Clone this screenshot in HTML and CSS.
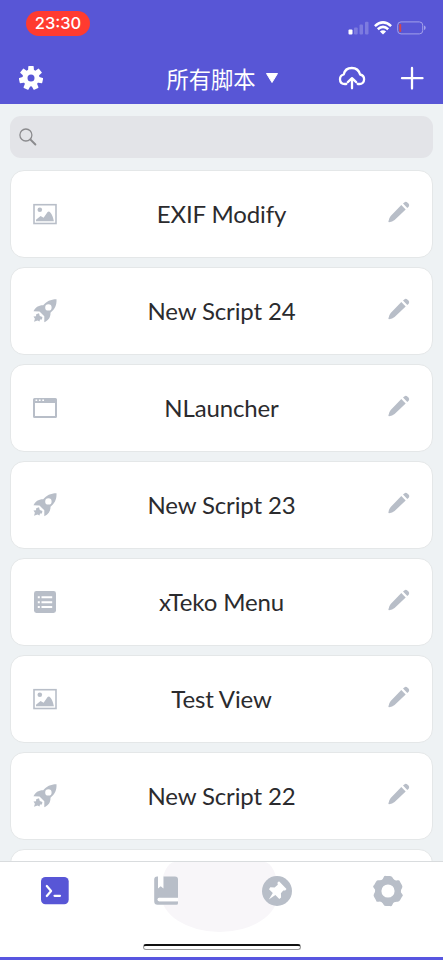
FILE: index.html
```html
<!DOCTYPE html>
<html lang="zh-CN">
<head>
<meta charset="utf-8">
<title>所有脚本</title>
<link rel="stylesheet" href="styles.css">
</head>
<body>
<svg class="defs" aria-hidden="true">
  <symbol id="image" viewBox="0 0 24 24">
    <rect x="1" y="2.700" width="22" height="18.800" fill="none" stroke="currentColor" stroke-width="1.600"/>
    <circle cx="6.800" cy="7.800" r="2.300"/>
    <path d="M3 19.200v-1.500l4.600-3.600 3 1.600 4-5.600q1.300-1.200 2.700.3 2.400 2.500 3.600 8.800z"/>
  </symbol>
  <symbol id="rocket" viewBox="0 0 24 24">
    <path fill-rule="evenodd" d="M23.500.3C17.500.3 13.500 2.500 10.200 6.300 5.500 6.200 2.300 8.500.500 12.300L6.500 12.500 11.300 17.300 11.300 23.300C15.700 21 17.600 18.300 17.500 13.700 21.800 10.200 23.800 6.300 23.500.3ZM15.400 5.200a3.200 3.200 0 1 1 0 6.400 3.200 3.200 0 0 1 0-6.400Z"/>
    <path d="M3.200 15.200 6 14.300l.8 2.700 2.600.9-.5 2.500-1.900.2-.5 2-2-1.100-3.500 1.200.9-3-1.400-2.100 2.500-.4Z"/>
  </symbol>
  <symbol id="window" viewBox="0 0 24 24">
    <path fill-rule="evenodd" d="M1.500 2h21q1.500 0 1.500 1.500v17q0 1.500-1.500 1.500h-21Q0 22 0 20.500v-17Q0 2 1.500 2Zm.5 5v13h20V7Z"/>
    <path fill="#fff" d="M2.500 3.500h1.700v1.600H2.500zm3.400 0h1.700v1.600H5.900zm3.400 0H11v1.600H9.300z"/>
  </symbol>
  <symbol id="list" viewBox="0 0 24 24">
    <rect x="1" y="1" width="22" height="22" rx="2.400"/>
    <path fill="#fff" d="M4.800 6.300h2v2h-2zm3.700 0h10.700v2H8.500zM4.800 11.200h2v2h-2zm3.700 0h10.700v2H8.500zM4.800 16h2v2h-2zm3.700 0h10.700v2H8.500z"/>
  </symbol>
  <symbol id="pencil" viewBox="0 0 24 24">
    <path d="M14.300 5 18.700 9.400 7.600 20q-2.300 1.800-5.500 2.200-.8 0-.7-.8.400-3.200 2.300-5.400ZM16 3.600l1.300-1.200q1.600-1.200 3.300.3l.9.900q1.400 1.500.2 3.200L20.300 8.100Z"/>
  </symbol>
</svg>

<div class="app">
  <header class="header">
    <div class="status">
      <span class="clock">23:30</span>
      <div class="indicators">
        <svg width="21" height="14" viewBox="0 0 21 14" fill="#fff"><rect x=".5" y="8.500" width="4" height="5" rx="1"/><g opacity=".22"><rect x="6" y="6.500" width="3.700" height="7" rx="1"/><rect x="11.500" y="3.500" width="3.500" height="10" rx="1"/><rect x="17" y=".7" width="3.500" height="12.800" rx="1"/></g></svg>
        <svg width="18" height="14" viewBox="0 0 18 14" fill="none" stroke="#fff" stroke-width="2.500"><path d="M.9 5.100Q9-2.400 17.100 5.100M3.800 8.200Q9 3.500 14.200 8.200"/><path fill="#fff" stroke="none" d="M5.900 10.400Q9 8 12.100 10.400L9 13.500Z"/></svg>
        <svg width="29" height="14" viewBox="0 0 29 14"><rect x=".7" y=".9" width="25" height="12" rx="3.300" fill="none" stroke="#a3a1ea"/><path fill="#a3a1ea" d="M27 4.500q1.700.6 1.700 2.300T27 9.100z"/><rect x="2.200" y="3" width="2" height="8" rx=".8" fill="#cf4650"/></svg>
      </div>
    </div>
    <nav class="nav">
      <svg class="nav-gear" width="24" height="24" viewBox="-12 -12 24 24" fill="#fff">
        <circle r="6" fill="none" stroke="#fff" stroke-width="5"/>
        <path id="tooth" d="M-3-7-2.700-11.400q0-.6.6-.6h4.200q.6 0 .6.600L3-7z"/>
        <use href="#tooth" transform="rotate(51.430)"/><use href="#tooth" transform="rotate(102.860)"/><use href="#tooth" transform="rotate(154.290)"/><use href="#tooth" transform="rotate(205.710)"/><use href="#tooth" transform="rotate(257.140)"/><use href="#tooth" transform="rotate(308.570)"/>
      </svg>
      <div class="nav-title"><h1>所有脚本</h1><svg width="12" height="10" viewBox="0 0 12 10"><path fill="#fff" d="M.5.500h11L6 9.500z" stroke="#fff" stroke-linejoin="round"/></svg></div>
      <div class="nav-actions">
        <svg width="28" height="24" viewBox="0 0 28 24" fill="none" stroke="#fff" stroke-width="2.300" stroke-linecap="round" stroke-linejoin="round"><path d="M8.300 18H7C3.800 18 2 15.900 2 13.200c0-2.500 1.600-4.200 3.700-4.700C6.500 4.500 9.800 2 13.800 2c4.200 0 7.300 2.700 8.300 6.500 2.400.5 4 2.200 4 4.700 0 2.700-1.900 4.800-4.600 4.800h-1.800M14 22.300v-9.500M9.800 16.100 14 12.200l4.200 3.900"/></svg>
        <svg width="24" height="24" viewBox="0 0 24 24" stroke="#fff" stroke-width="2.300" stroke-linecap="round"><path d="M12 2v20.500M2 12.200h20.500"/></svg>
      </div>
    </nav>
  </header>

  <main class="content">
    <div class="search"><svg width="18" height="18" viewBox="0 0 18 18" fill="none" stroke="#8b8b8e"><circle cx="6.900" cy="7" r="6" stroke-width="1.300"/><path d="m11.400 11.500 5 5" stroke-width="1.900" stroke-linecap="round"/></svg></div>
    <div class="card"><svg class="icon"><use href="#image"/></svg><span>EXIF Modify</span><svg class="icon"><use href="#pencil"/></svg></div>
    <div class="card"><svg class="icon"><use href="#rocket"/></svg><span>New Script 24</span><svg class="icon"><use href="#pencil"/></svg></div>
    <div class="card"><svg class="icon"><use href="#window"/></svg><span>NLauncher</span><svg class="icon"><use href="#pencil"/></svg></div>
    <div class="card"><svg class="icon"><use href="#rocket"/></svg><span>New Script 23</span><svg class="icon"><use href="#pencil"/></svg></div>
    <div class="card"><svg class="icon"><use href="#list"/></svg><span>xTeko Menu</span><svg class="icon"><use href="#pencil"/></svg></div>
    <div class="card"><svg class="icon"><use href="#image"/></svg><span>Test View</span><svg class="icon"><use href="#pencil"/></svg></div>
    <div class="card"><svg class="icon"><use href="#rocket"/></svg><span>New Script 22</span><svg class="icon"><use href="#pencil"/></svg></div>
    <div class="card"></div>
  </main>

  <footer class="tabbar">
    <div class="glow"></div>
    <div class="tabs">
      <svg viewBox="0 0 32 32"><rect x="2" y="2" width="27.700" height="27.300" rx="4.500" fill="#5856d6"/><path d="m7.800 11 4.300 5-4.300 5" fill="none" stroke="#fff" stroke-width="2.200" stroke-linecap="round" stroke-linejoin="round"/><path d="M15.500 20.800h5.500" stroke="#fff" stroke-width="2.200" stroke-linecap="round"/></svg>
      <svg viewBox="0 0 32 32"><path fill="#fff" d="M8 1.500h5.500v12H8z"/><path fill="#b8bec8" d="M8 1.500v12l2.700-2.200 2.800 2.200v-12H25q3 0 3 3V22.800H9q-1.500 0-1.500 1.700T9 26.300h19v2q0 1.500-1.500 1.500H7.500q-3.300 0-3.300-3.500V4.500q0-3 3-3Z"/><path fill="#fff" d="M9 23h19v3.200H9q-1.200 0-1.200-1.600T9 23Z"/></svg>
      <svg viewBox="0 0 32 32"><circle cx="16" cy="16" r="15" fill="#b8bec8"/><path fill="#fff" d="m18 6.300 7.500 7.600-1.300 1.700-1.900-.2-2.400 2.900.2 4.300-1.800 1.400-3.900-4.100L7.800 24.600l4-6.700-3.800-3.600 1.300-2 4.300.2 3.200-2.700-.4-2.100Z"/></svg>
      <svg viewBox="-16 -16 32 32"><circle r="9.700" fill="none" stroke="#b8bec8" stroke-width="6.200"/><g fill="#b8bec8"><path id="lobe" d="M-7-10.500Q-5.200-11-4.500-13.500T-2-15H2q1.800 0 2.500 1.500T7-10.500z"/><use href="#lobe" transform="rotate(60)"/><use href="#lobe" transform="rotate(120)"/><use href="#lobe" transform="rotate(180)"/><use href="#lobe" transform="rotate(240)"/><use href="#lobe" transform="rotate(300)"/></g></svg>
    </div>
    <div class="home"></div>
  </footer>
</div>
</body>
</html>
```

FILE: styles.css
```css
* { box-sizing: border-box; }
body { margin: 0; }
svg { display: block; flex: none; }
.defs { position: absolute; width: 0; height: 0; }
.app {
  height: 960px;
  display: flex;
  flex-direction: column;
  overflow: hidden;
  background: #eef2f4;
  font-family: Lato, "Noto Sans CJK SC", sans-serif;
}
.header {
  height: 104px;
  flex: none;
  background: #5856d6;
  color: #fff;
}
.status {
  height: 48px;
  padding: 11px 16px 0 26px;
  display: flex;
  justify-content: space-between;
  align-items: flex-start;
}
.clock {
  width: 64px;
  height: 25px;
  border-radius: 13px;
  background: #ff3b30;
  font: 500 16.500px/25px Inter, sans-serif;
  text-align: center;
}
.indicators { display: flex; gap: 5px; padding-top: 10px; margin-right: 1px; }
.nav {
  height: 56px;
  padding: 0 19px;
  display: grid;
  grid-template-columns: 1fr auto 1fr;
  align-items: center;
}
.nav-gear { margin-top: 4px; }
.nav-title { display: flex; align-items: center; gap: 10px; padding: 3px 0 0 1px; }
.nav-title h1 {
  margin: 0;
  font: 400 22.300px/32px "Noto Sans CJK SC", sans-serif;
}
.nav-actions { display: flex; justify-content: flex-end; gap: 34px; padding-top: 4px; }
.content {
  flex: 1;
  min-height: 0;
  overflow: hidden;
  padding: 12px 10px 0;
}
.search {
  height: 42px;
  margin-bottom: 12px;
  padding: 12px 9px;
  border-radius: 11px;
  background: #e3e4e8;
}
.card {
  height: 88px;
  margin-bottom: 9px;
  padding: 0 22px;
  display: flex;
  align-items: center;
  justify-content: space-between;
  border: 1px solid #e4e7e8;
  border-radius: 14px;
  background: #fff;
  color: #2b2b2e;
  font-size: 24px;
  line-height: 30px;
  letter-spacing: -0.13px;
}
.card span { padding-bottom: 1px; }
.icon { width: 24px; height: 24px; color: #b8bec8; fill: currentColor; }
.card .icon:last-child { margin: -4px -1px 0 1px; }
.tabbar {
  position: relative;
  height: 99px;
  flex: none;
  display: flex;
  flex-direction: column;
  align-items: center;
  border-top: 1px solid #d9dcde;
  border-bottom: 3px solid #5856e0;
  background: #fff;
}
.glow {
  position: absolute;
  left: 161px;
  top: 0;
  width: 117px;
  height: 70px;
  border-radius: 14px 14px 58px 58px / 30px 30px 38px 38px;
  background: #f8f6f9;
}
.tabs {
  position: relative;
  width: 443px;
  display: grid;
  grid-template-columns: repeat(4, 1fr);
  justify-items: center;
  padding-top: 13px;
}
.tabs svg { width: 32px; height: 32px; }
.home {
  width: 158px;
  height: 6px;
  margin-top: 37px;
  border: 1px solid #999;
  border-top: 2px solid #111;
  border-radius: 4px;
}
```
